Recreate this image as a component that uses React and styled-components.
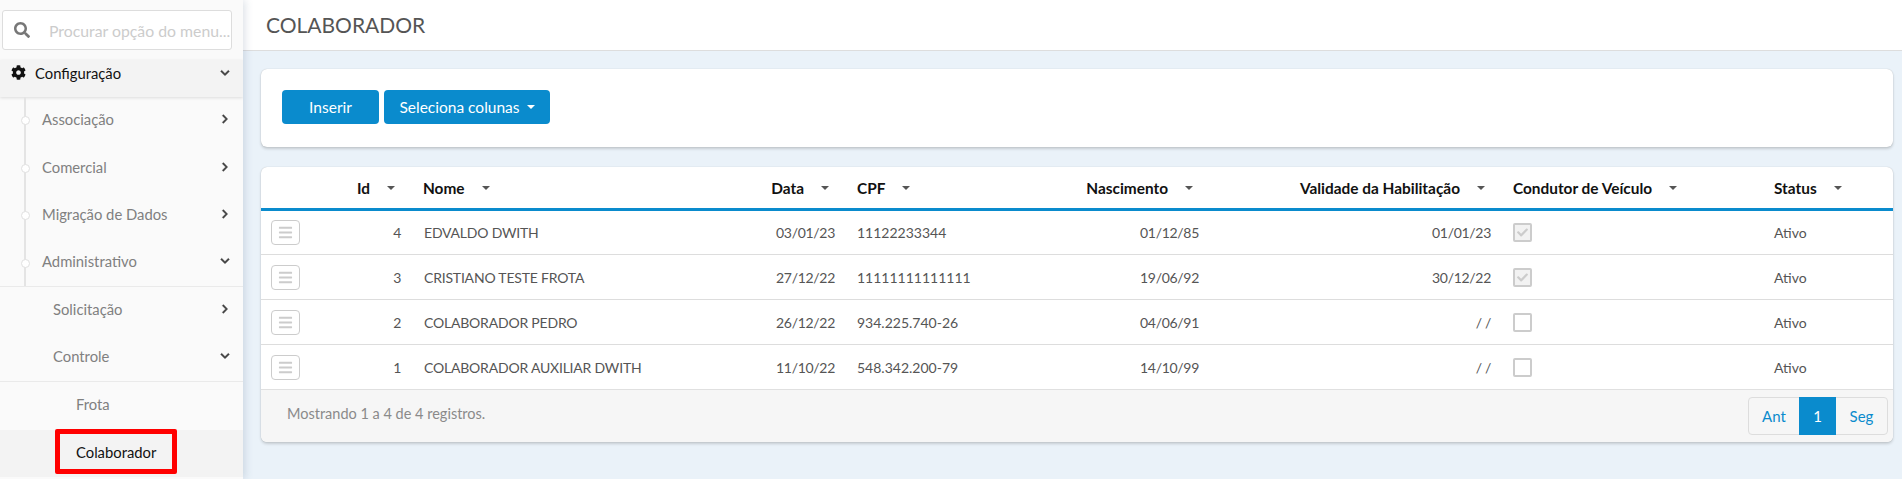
import React from "react";
import styled, { createGlobalStyle } from "styled-components";
import { FaBars, FaCheck, FaChevronDown, FaChevronRight, FaCog, FaSearch } from "react-icons/fa";

const columns = [
  { key: "menu", width: 85 },
  { key: "id", label: "Id", width: 66, right: true },
  { key: "nome", label: "Nome", width: 350 },
  { key: "data", label: "Data", width: 84, right: true },
  { key: "cpf", label: "CPF", width: 228 },
  { key: "nascimento", label: "Nascimento", width: 136, right: true },
  { key: "validade", label: "Validade da Habilitação", width: 292, right: true },
  { key: "condutor", label: "Condutor de Veículo", width: 261 },
  { key: "status", label: "Status", width: 130 },
];

const rows = [
  { id: 4, nome: "EDVALDO DWITH", data: "03/01/23", cpf: "11122233344", nascimento: "01/12/85", validade: "01/01/23", condutor: true },
  { id: 3, nome: "CRISTIANO TESTE FROTA", data: "27/12/22", cpf: "11111111111111", nascimento: "19/06/92", validade: "30/12/22", condutor: true },
  { id: 2, nome: "COLABORADOR PEDRO", data: "26/12/22", cpf: "934.225.740-26", nascimento: "04/06/91", validade: "/ /", condutor: false },
  { id: 1, nome: "COLABORADOR AUXILIAR DWITH", data: "11/10/22", cpf: "548.342.200-79", nascimento: "14/10/99", validade: "/ /", condutor: false },
];

const App = () => {
  return (
    <Page>
      <GlobalStyle />
      <Sidebar>
        <SearchBox>
          <FaSearch />
          <span>Procurar opção do menu...</span>
        </SearchBox>
        <MenuHead>
          <FaCog />
          <span>Configuração</span>
          <FaChevronDown />
        </MenuHead>
        <TreeItem>
          Associação
          <FaChevronRight />
        </TreeItem>
        <TreeItem>
          Comercial
          <FaChevronRight />
        </TreeItem>
        <TreeItem>
          Migração de Dados
          <FaChevronRight />
        </TreeItem>
        <TreeItem $open>
          Administrativo
          <FaChevronDown />
        </TreeItem>
        <SubItem>
          Solicitação
          <FaChevronRight />
        </SubItem>
        <SubItem $open>
          Controle
          <FaChevronDown />
        </SubItem>
        <LeafItem>Frota</LeafItem>
        <LeafItem $active>
          Colaborador
          <RedMark />
        </LeafItem>
      </Sidebar>
      <Main>
        <TitleBar>COLABORADOR</TitleBar>
        <Content>
          <Card>
            <Toolbar>
              <Button $wide>Inserir</Button>
              <Button>
                Seleciona colunas
                <ButtonCaret />
              </Button>
            </Toolbar>
          </Card>
          <Card>
            <Table>
              <colgroup>
                {columns.map((col) => (
                  <col key={col.key} width={col.width} />
                ))}
              </colgroup>
              <thead>
                <tr>
                  {columns.map((col) => (
                    <Th key={col.key}>
                      {col.label && (
                        <HeadLabel $right={col.right}>
                          {col.label}
                          <SortCaret />
                        </HeadLabel>
                      )}
                    </Th>
                  ))}
                </tr>
              </thead>
              <tbody>
                {rows.map((row) => (
                  <tr key={row.id}>
                    <Td>
                      <MenuButton>
                        <FaBars />
                      </MenuButton>
                    </Td>
                    <Td $right>{row.id}</Td>
                    <Td $name>{row.nome}</Td>
                    <Td $right>{row.data}</Td>
                    <Td>{row.cpf}</Td>
                    <Td $right>{row.nascimento}</Td>
                    <Td $right>{row.validade}</Td>
                    <Td>
                      <CheckBox $checked={row.condutor}>{row.condutor && <FaCheck />}</CheckBox>
                    </Td>
                    <Td>Ativo</Td>
                  </tr>
                ))}
              </tbody>
            </Table>
            <Footer>
              <span>Mostrando 1 a 4 de 4 registros.</span>
              <Pagination>
                <PageLink $first>Ant</PageLink>
                <PageLink $current>1</PageLink>
                <PageLink>Seg</PageLink>
              </Pagination>
            </Footer>
          </Card>
        </Content>
      </Main>
    </Page>
  );
};

const GlobalStyle = createGlobalStyle`
  html, body {
    margin: 0;
    height: 100%;
    overflow: hidden;
  }
  body {
    font-family: "Lato", "Liberation Sans", sans-serif;
    font-size: 14px;
    color: #555;
  }
`;

const Page = styled.div`
  display: flex;
  height: 100vh;
  background: #eaf2f9;
`;

const Sidebar = styled.aside`
  width: 243px;
  flex-shrink: 0;
  display: flex;
  flex-direction: column;
  background: #fafafa;
  box-shadow: 2px 0 8px rgba(60, 90, 120, 0.18);
  position: relative;
  z-index: 2;
  overflow: hidden;
  font-size: 14.8px;
`;

const SearchBox = styled.div`
  height: 40px;
  box-sizing: border-box;
  flex-shrink: 0;
  margin: 10px 11px 10px 2px;
  display: flex;
  align-items: center;
  gap: 19px;
  padding-left: 11px;
  background: #fff;
  border: 1px solid #ddd;
  border-radius: 3px;
  color: #ccc;
  font-size: 15.8px;
  white-space: nowrap;
  svg {
    width: 16px;
    height: 16px;
    color: #777;
    flex-shrink: 0;
  }
`;

const MenuHead = styled.div`
  height: 37px;
  box-sizing: border-box;
  flex-shrink: 0;
  display: flex;
  align-items: center;
  padding: 0 13px 12px 11px;
  background: #f3f3f3;
  color: #111;
  box-shadow: 0 1px 3px rgba(0, 0, 0, 0.12);
  position: relative;
  span {
    margin-left: 9px;
    flex: 1;
  }
  svg:first-child {
    width: 15px;
    height: 15px;
  }
  svg:last-child {
    width: 10px;
    height: 10px;
    color: #444;
    stroke: #444;
    stroke-width: 20px;
  }
`;

const Row = styled.div`
  display: flex;
  align-items: center;
  justify-content: space-between;
  height: 47.5px;
  box-sizing: border-box;
  flex-shrink: 0;
  padding-bottom: 3px;
  color: #808080;
  border-bottom: ${(p) => (p.$open ? "1px solid #eaeaea" : "none")};
  svg {
    width: 10px;
    height: 10px;
    color: #444;
    stroke: #444;
    stroke-width: 20px;
    margin-right: 13px;
  }
`;

const TreeItem = styled(Row)`
  position: relative;
  padding-left: 42px;
  &::before {
    content: "";
    position: absolute;
    left: 24px;
    top: 0;
    bottom: 0;
    width: 2px;
    background: #e4e4e4;
  }
  &::after {
    content: "";
    position: absolute;
    left: 21px;
    top: 19px;
    width: 7px;
    height: 7px;
    background: #fff;
    border: 1px solid #e0e0e0;
    border-radius: 50%;
  }
`;

const SubItem = styled(Row)`
  padding-left: 53px;
`;

const LeafItem = styled(Row)`
  position: relative;
  padding-left: 76px;
  color: ${(p) => (p.$active ? "#111" : "#808080")};
  background: ${(p) => (p.$active ? "#f3f3f3" : "transparent")};
`;

const RedMark = styled.div`
  position: absolute;
  left: 55px;
  top: -1px;
  width: 122px;
  height: 45px;
  box-sizing: border-box;
  border: 5px solid #f00;
  border-radius: 2px;
`;

const Main = styled.main`
  flex: 1;
  min-width: 0;
  display: flex;
  flex-direction: column;
`;

const TitleBar = styled.header`
  height: 50px;
  box-sizing: content-box;
  flex-shrink: 0;
  display: flex;
  align-items: center;
  padding-left: 23px;
  background: #fff;
  border-bottom: 1px solid #ddd;
  font-size: 21px;
  line-height: 48px;
  color: #555;
`;

const Content = styled.div`
  display: flex;
  flex-direction: column;
  gap: 20px;
  padding: 18px 9px 0 18px;
`;

const Card = styled.section`
  background: #fff;
  border-radius: 6px;
  box-shadow: 0 0 1px rgba(0, 0, 0, 0.25), 0 2px 3px rgba(0, 0, 0, 0.16);
  overflow: hidden;
`;

const Toolbar = styled.div`
  display: flex;
  gap: 5px;
  padding: 21px 21px 23px;
  justify-content: flex-start;
`;

const Button = styled.button`
  height: 34px;
  width: ${(p) => (p.$wide ? "97px" : "166px")};
  border: 0;
  border-radius: 4px;
  background: #0a8bcd;
  color: #fff;
  font: inherit;
  font-size: 15.5px;
  display: flex;
  align-items: center;
  justify-content: center;
`;

const ButtonCaret = styled.i`
  margin-left: 7px;
  border-top: 4px solid #fff;
  border-left: 4px solid transparent;
  border-right: 4px solid transparent;
`;

const Table = styled.table`
  width: 100%;
  table-layout: fixed;
  border-collapse: collapse;
`;

const Th = styled.th`
  height: 41px;
  padding: 0 11px;
  border-bottom: 3px solid #0a8bcd;
  color: #111;
  font-size: 15.4px;
  font-weight: 700;
  text-align: left;
`;

const HeadLabel = styled.div`
  display: flex;
  align-items: center;
  white-space: nowrap;
  justify-content: ${(p) => (p.$right ? "flex-end" : "flex-start")};
  padding-right: ${(p) => (p.$right ? "6px" : "0")};
`;

const SortCaret = styled.i`
  margin-left: 17px;
  border-top: 4px solid #555;
  border-left: 4px solid transparent;
  border-right: 4px solid transparent;
`;

const Td = styled.td`
  height: 44px;
  padding: 0 ${(p) => (p.$name ? "10px" : "11px")} 0 ${(p) => (p.$name ? "12px" : "11px")};
  border-bottom: 1px solid #ddd;
  text-align: ${(p) => (p.$right ? "right" : "left")};
  letter-spacing: ${(p) => (p.$name ? "-0.2px" : p.$right ? "-0.3px" : "0")};
  white-space: nowrap;
  tr:first-child > & {
    height: 43px;
  }
  tr:last-child > & {
    border-bottom-color: #e0e0e0;
  }
`;

const MenuButton = styled.div`
  width: 29px;
  height: 25px;
  box-sizing: border-box;
  display: flex;
  align-items: center;
  justify-content: center;
  border: 1px solid #ccc;
  border-radius: 4px;
  margin-left: -1px;
  svg {
    width: 15px;
    height: 15px;
    color: #ccc;
  }
`;

const CheckBox = styled.div`
  width: 19px;
  height: 19px;
  box-sizing: border-box;
  display: flex;
  align-items: center;
  justify-content: center;
  border: 2px solid #ccc;
  border-radius: 2px;
  background: ${(p) => (p.$checked ? "#f2f2f2" : "#fff")};
  svg {
    width: 11px;
    height: 11px;
    color: #ccc;
  }
`;

const Footer = styled.footer`
  height: 52px;
  box-sizing: border-box;
  display: flex;
  align-items: flex-start;
  justify-content: space-between;
  padding: 7px 5px 0 26px;
  background: #f6f6f6;
  color: #8a8a8a;
  font-size: 14.5px;
  span {
    line-height: 34px;
  }
`;

const Pagination = styled.nav`
  display: flex;
  height: 38px;
  box-sizing: border-box;
  border: 1px solid #ddd;
  border-radius: 4px;
  background: #f6f6f6;
  font-size: 15px;
`;

const PageLink = styled.a`
  display: flex;
  align-items: center;
  justify-content: center;
  width: ${(p) => (p.$current ? "37px" : p.$first ? "50px" : "51px")};
  margin: ${(p) => (p.$current ? "-1px 0" : "0")};
  color: ${(p) => (p.$current ? "#fff" : "#0a8bcd")};
  background: ${(p) => (p.$current ? "#0a8bcd" : "transparent")};
`;

export default App;
